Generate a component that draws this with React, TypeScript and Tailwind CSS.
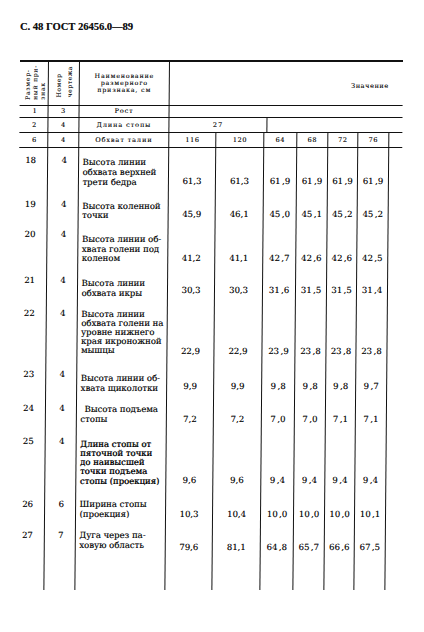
import React from 'react';

type Row = {
  n: string;
  d: string;
  lines: string[];
  vals: string[];
  h: string;
  npt: string;
  tpt: string;
  lead: string;
  vpt: string;
  heavy?: boolean;
  indentFirst?: boolean;
};

const rows: Row[] = [
  { n: '18', d: '4', lines: ['Высота линии', 'обхвата верхней', 'трети бедра'], vals: ['61,3', '61,3', '61,9', '61,9', '61,9', '61,9'], h: 'h-[47px]', npt: 'pt-[8.25px]', tpt: 'pt-[8.55px]', lead: 'leading-[10.3px]', vpt: 'pt-[29.25px]' },
  { n: '19', d: '4', lines: ['Высота коленной', 'точки'], vals: ['45,9', '46,1', '45,0', '45,1', '45,2', '45,2'], h: 'h-[30px]', npt: 'pt-[5.25px]', tpt: 'pt-[6.75px]', lead: 'leading-[9.5px]', vpt: 'pt-[15.25px]' },
  { n: '20', d: '4', lines: ['Высота линии об-', 'хвата голени под', 'коленом'], vals: ['41,2', '41,1', '42,7', '42,6', '42,6', '42,5'], h: 'h-[46px]', npt: 'pt-[5.25px]', tpt: 'pt-[10.4px]', lead: 'leading-[9.2px]', vpt: 'pt-[29.25px]' },
  { n: '21', d: '4', lines: ['Высота линии', 'обхвата икры'], vals: ['30,3', '30,3', '31,6', '31,5', '31,5', '31,4'], h: 'h-[32px]', npt: 'pt-[5.25px]', tpt: 'pt-[6.7px]', lead: 'leading-[10px]', vpt: 'pt-[15.25px]' },
  { n: '22', d: '4', lines: ['Высота линии', 'обхвата голени на', 'уровне нижнего', 'края икроножной', 'мышцы'], vals: ['22,9', '22,9', '23,9', '23,8', '23,8', '23,8'], h: 'h-[62px]', npt: 'pt-[5.55px]', tpt: 'pt-[6.75px]', lead: 'leading-[9.1px]', vpt: 'pt-[43.75px]' },
  { n: '23', d: '4', lines: ['Высота линии об-', 'хвата щиколотки'], vals: ['9,9', '9,9', '9,8', '9,8', '9,8', '9,7'], h: 'h-[33px]', npt: 'pt-[5.25px]', tpt: 'pt-[7.7px]', lead: 'leading-[10px]', vpt: 'pt-[17.25px]' },
  { n: '24', d: '4', lines: ['Высота подъема', 'стопы'], vals: ['7,2', '7,2', '7,0', '7,0', '7,1', '7,1'], h: 'h-[33px]', npt: 'pt-[5.55px]', tpt: 'pt-[7.35px]', lead: 'leading-[9.3px]', vpt: 'pt-[16.55px]', indentFirst: true },
  { n: '25', d: '4', lines: ['Длина стопы от', 'пяточной точки', 'до наивысшей', 'точки подъема', 'стопы (проекция)'], vals: ['9,6', '9,6', '9,4', '9,4', '9,4', '9,4'], h: 'h-[64px]', npt: 'pt-[5.95px]', tpt: 'pt-[8.7px]', lead: 'leading-[9.2px]', vpt: 'pt-[45.25px]', heavy: true },
  { n: '26', d: '6', lines: ['Ширина стопы', '(проекция)'], vals: ['10,3', '10,4', '10,0', '10,0', '10,0', '10,1'], h: 'h-[31px]', npt: 'pt-[5.25px]', tpt: 'pt-[5.35px]', lead: 'leading-[9.3px]', vpt: 'pt-[15.25px]' },
  { n: '27', d: '7', lines: ['Дуга через па-', 'ховую область'], vals: ['79,6', '81,1', '64,8', '65,7', '66,6', '67,5'], h: 'h-[64px]', npt: 'pt-[5.25px]', tpt: 'pt-[4px]', lead: 'leading-[10px]', vpt: 'pt-[17.25px]' },
];

const valW = ['w-[47px]', 'w-[48px]', 'w-[33px]', 'w-[31px]', 'w-[30px]', 'w-[31px]'];
const sizes = ['116', '120', '64', '68', '72', '76'];

const B = 'border-[#111]';

function Val({ v, spaced }: { v: string; spaced: boolean }) {
  const [a, b] = v.split(',');
  if (!spaced) return <>{v}</>;
  return (
    <>
      {a}
      <span className="ml-[1.5px]">,{b}</span>
    </>
  );
}

export default function App() {
  return (
    <div className="w-[424px] h-[632px] bg-white text-[#0d0d0d] [text-shadow:0.25px_0_0_rgba(0,0,0,0.55)] font-['DejaVu_Serif',serif] flex flex-col overflow-hidden">
      <div className="mt-[21px] ml-[20px] h-[12px] leading-[12px] text-[10.5px] font-bold font-['Liberation_Serif',serif] text-[#111]">
        С. 48 ГОСТ 26456.0—89
      </div>

      <div className="mt-[27px] ml-[20px] w-[383px] origin-top skew-x-[-0.5deg] flex flex-col">
        <div className="h-[2px] bg-[#111]" />

        {/* header */}
        <div className={`flex h-[44px] border-b ${B}`}>
          <div className={`w-[29px] shrink-0 border-r ${B} flex items-end justify-center pb-[5px] pl-[2px]`}>
            <div className="[writing-mode:vertical-rl] rotate-180 text-[6px] leading-[7.5px] tracking-[0.8px] text-left">
              Размер-
              <br />
              ный при-
              <br />
              знак
            </div>
          </div>
          <div className={`w-[31px] shrink-0 border-r ${B} flex items-end justify-center pb-[7px]`}>
            <div className="[writing-mode:vertical-rl] rotate-180 text-[6px] leading-[11px] tracking-[0.6px] text-left">
              Номер
              <br />
              чертежа
            </div>
          </div>
          <div className={`w-[90px] shrink-0 border-r ${B} flex items-center justify-center`}>
            <div className="text-center text-[6.2px] leading-[6.7px] tracking-[0.9px]">
              Наименование
              <br />
              размерного
              <br />
              признака, см
            </div>
          </div>
          <div className="flex-1 flex items-center justify-end pr-[14px] pt-[6px] text-[6.5px] tracking-[0.6px]">
            Значение
          </div>
        </div>

        {/* row 1 */}
        <div className={`flex h-[12px] border-b ${B} text-[6.5px] leading-[11px] tracking-[0.9px]`}>
          <div className={`w-[29px] shrink-0 border-r ${B} text-center pl-[3px]`}>1</div>
          <div className={`w-[31px] shrink-0 border-r ${B} text-center`}>3</div>
          <div className={`w-[90px] shrink-0 border-r ${B} text-center`}>Рост</div>
          <div className="flex-1" />
        </div>

        {/* row 2 */}
        <div className={`flex h-[15px] border-b ${B} text-[6.5px] leading-[14px] tracking-[0.9px]`}>
          <div className={`w-[29px] shrink-0 border-r ${B} text-center pl-[2px]`}>2</div>
          <div className={`w-[31px] shrink-0 border-r ${B} text-center`}>4</div>
          <div className={`w-[90px] shrink-0 border-r ${B} text-center`}>Длина стопы</div>
          <div className={`w-[98px] shrink-0 border-r ${B} text-center`}>27</div>
          <div className="flex-1" />
        </div>

        {/* row 6 */}
        <div className={`flex h-[15px] border-b ${B} text-[6.5px] leading-[14px] tracking-[0.6px]`}>
          <div className={`w-[29px] shrink-0 border-r ${B} text-center pl-[2px]`}>6</div>
          <div className={`w-[31px] shrink-0 border-r ${B} text-center`}>4</div>
          <div className={`w-[90px] shrink-0 border-r ${B} text-center tracking-[0.9px]`}>Обхват талии</div>
          {sizes.map((s, i) => (
            <div key={i} className={`${valW[i]} shrink-0 border-r ${B} text-center`}>
              {s}
            </div>
          ))}
          <div className="flex-1" />
        </div>

        {/* data rows */}
        {rows.map((r) => (
          <div key={r.n} className={`flex ${r.h} text-[8.5px]`}>
            <div className={`w-[29px] shrink-0 border-r ${B} text-center pr-[5px] leading-[9.5px] ${r.npt}`}>{r.n}</div>
            <div className={`w-[31px] shrink-0 border-r ${B} text-center pl-[2px] leading-[9.5px] ${r.npt}`}>{r.d}</div>
            <div
              className={`w-[90px] shrink-0 border-r ${B} pl-[3.5px] whitespace-nowrap ${r.lead} ${r.tpt} ${
                r.heavy ? 'text-black [text-shadow:0.4px_0_0_rgba(0,0,0,0.8)]' : ''
              }`}
            >
              {r.lines.map((l, i) => (
                <div key={i} className={i === 0 && r.indentFirst ? 'pl-[4px]' : ''}>
                  {l}
                </div>
              ))}
            </div>
            {r.vals.map((v, i) => (
              <div key={i} className={`${valW[i]} shrink-0 border-r ${B} text-center leading-[9.5px] ${r.vpt}`}>
                <Val v={v} spaced={i >= 2} />
              </div>
            ))}
            <div className="flex-1" />
          </div>
        ))}
      </div>
    </div>
  );
}
